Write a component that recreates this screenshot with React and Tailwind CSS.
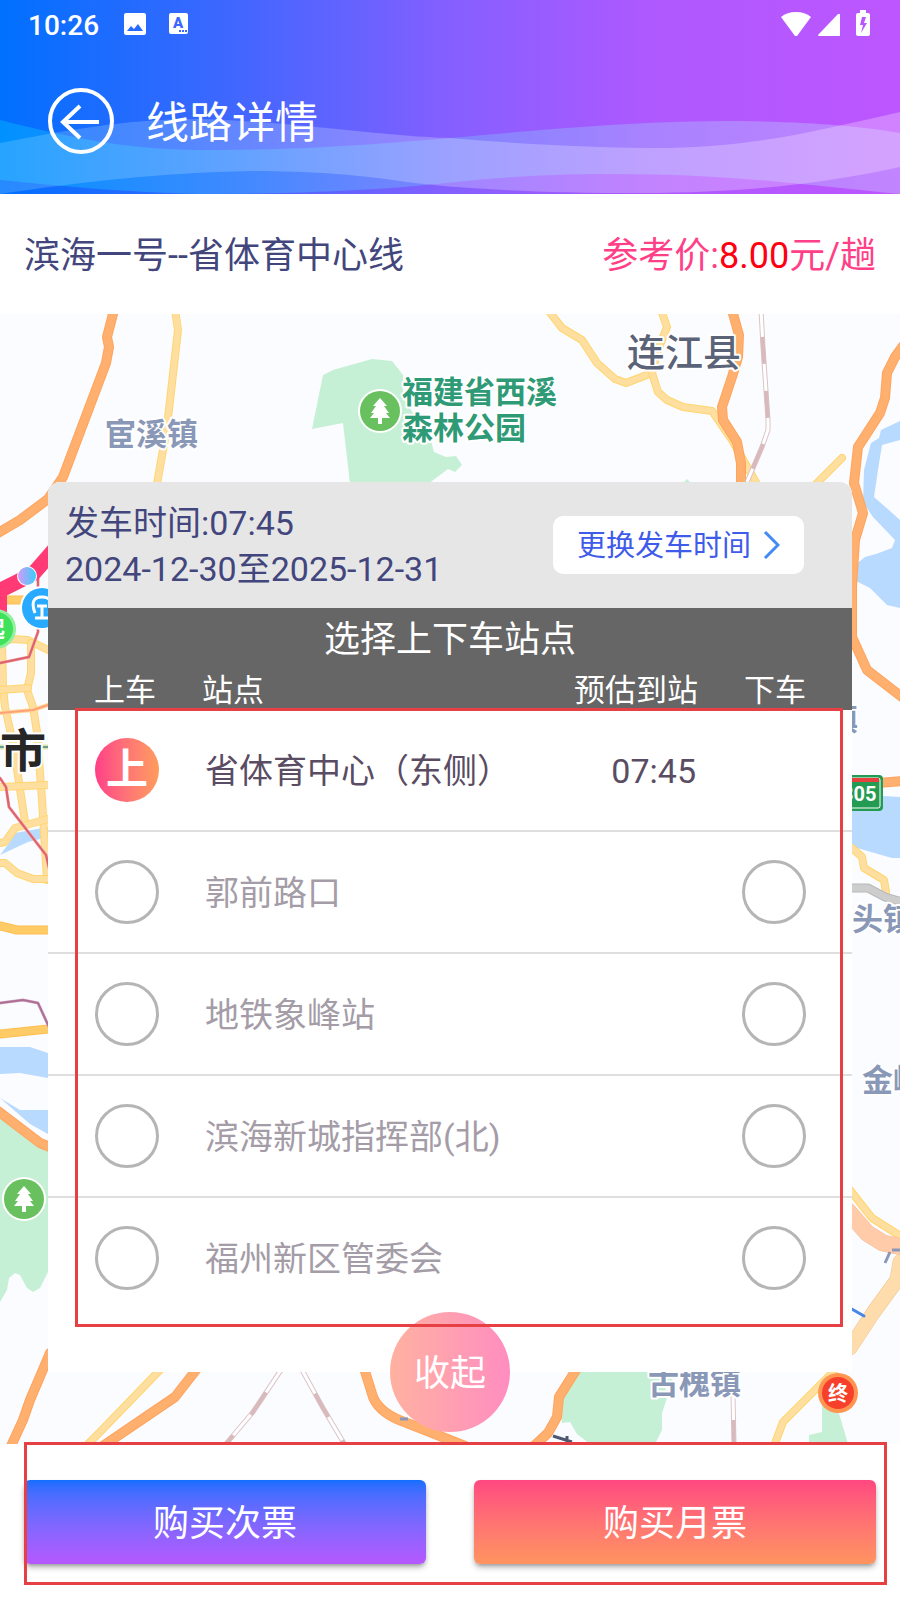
// App.jsx
import React, { useState } from 'react';

const STOPS = [
  { id: 1, name: '省体育中心（东侧）', time: '07:45' },
  { id: 2, name: '郭前路口' },
  { id: 3, name: '地铁象峰站' },
  { id: 4, name: '滨海新城指挥部(北)' },
  { id: 5, name: '福州新区管委会' },
];

// [kind, path]
const ROADS = [
  ['teal', 'M0 747H48'],
  ['yellow', 'M175 310L178 330L167 427L157 484'],
  ['yellow', 'M548 310L562 328L582 340L597 363L615 379L626 383L652 373'],
  ['yellow', 'M661 310L667 327L658 350L652 373L658 392L667 400L683 407L712 411L732 440L745 463L758 486'],
  ['yellow', 'M842 458L815 485'],
  ['yellow', 'M0 642L12 639L28 640L48 650'],
  ['yellow', 'M31 643L31 673L27 690L33 707L37 732L42 800L47 880'],
  ['yellow', 'M2 643L3 687L5 707L13 743L25 822'],
  ['yellow', 'M0 690L28 688'],
  ['yellow', 'M0 787L48 785'],
  ['yellow', 'M48 819L15 828L5 842L0 843'],
  ['yellow', 'M0 863L5 863L17 873L33 879L50 879'],
  ['yellow', 'M852 848L862 857L864 868L884 880L886 892'],
  ['yellow', 'M850 1190L872 1218L902 1237'],
  ['yellow', 'M160 1370L100 1432L86 1446'],
  ['yellow', 'M835 1370L783 1422L774 1446'],
  ['amber', 'M0 600H24'],
  ['amber', 'M0 926L17 930H48'],
  ['amber', 'M0 1034L48 1029'],
  ['orange', 'M114 310L107 337L109 347L106 363L63 477L48 499L20 520L-2 533'],
  ['orange', 'M732 310L739 335L738 357L732 377L722 407L723 420L737 442L741 463L741 484'],
  ['orange', 'M903 346L895 357L887 373L885 398L880 413L858 447L854 483L863 513L855 540L852 587L852 637L867 670L902 697'],
  ['orange', 'M878 783L902 781'],
  ['orange', 'M-2 1111L40 1143L50 1147'],
  ['orange', 'M50 1353L30 1400L23 1420L11 1446'],
  ['orange', 'M196 1370L175 1397L103 1446'],
  ['orange', 'M364 1368L373 1397Q380 1414 407 1423L465 1446'],
  ['orange', 'M576 1370L559 1397L557 1417L548 1433L534 1446'],
  ['coral', 'M0 713L33 710L48 705'],
  ['red', 'M38 578V632L29 657L0 663'],
  ['red', 'M0 778L6 787L9 807L46 855L49 868'],
  ['purple', 'M0 1003L23 1000L38 1003L49 1027'],
  ['grey', 'M850 888L868 888L885 897L902 902'],
  ['salmon', 'M848 1211L867 1233L883 1243L902 1247'],
  ['peach', 'M900 1262L897 1280L873 1313L850 1348'],
  ['blue', 'M850 1308L864 1316'],
];

const ROAD_STYLES = {
  teal: { edge: '#d8e5b0', edgeWidth: 5, fill: '#6b9b8c', width: 2 },
  yellow: { edge: '#ffd66e', edgeWidth: 8, fill: '#ffdf9f', width: 6 },
  amber: { edge: '#ffbe50', edgeWidth: 9, fill: '#ffcb66', width: 7 },
  orange: { edge: '#ffa35c', edgeWidth: 10, fill: '#ffb06f', width: 8 },
  coral: { edge: '#ffd890', edgeWidth: 4, fill: '#ffa07c', width: 2 },
  red: { edge: '#f0a0a5', edgeWidth: 3, fill: '#de616b', width: 2 },
  purple: { edge: '#d6b0c6', edgeWidth: 3, fill: '#ad6f95', width: 2 },
  grey: { edge: '#b8b8b8', edgeWidth: 9, fill: '#cdcdcd', width: 7 },
  salmon: { edge: '#f6bb98', edgeWidth: 17, fill: '#ffcba9', width: 16 },
  peach: { edge: '#f0c790', edgeWidth: 15, fill: '#ffdcab', width: 14 },
  blue: { edge: '#4a86e8', edgeWidth: 3, fill: '#4a86e8', width: 2 },
};

const RAILS = [
  'M761 310L763 347L768 420L768 430L762 447L747 482',
  'M281 1370L253 1412L225 1445',
  'M302 1370L323 1408L345 1445',
  'M733 1393L734 1445',
];

const LABELS = [
  { text: '宦溪镇', x: 105, y: 445, className: 'fill-[#8a98b8] text-[31px] font-bold' },
  { text: '福建省西溪', x: 402, y: 403, className: 'fill-[#2f9b76] text-[31px] font-bold' },
  { text: '森林公园', x: 402, y: 439, className: 'fill-[#2f9b76] text-[31px] font-bold' },
  { text: '连江县', x: 627, y: 366, className: 'fill-[#5a6378] text-[38px] font-medium' },
  { text: '市', x: 0, y: 767, className: 'fill-[#262626] text-[46px] font-bold' },
  { text: '镇', x: 827, y: 730, className: 'fill-[#8a98b8] text-[31px] font-bold' },
  { text: '头镇', x: 852, y: 930, className: 'fill-[#8a98b8] text-[31px] font-bold' },
  { text: '金峰镇', x: 862, y: 1091, className: 'fill-[#8a98b8] text-[31px] font-bold' },
  { text: '古槐镇', x: 648, y: 1394, className: 'fill-[#8a98b8] text-[31px] font-bold' },
];

const ParkPin = ({ x, y }) => (
  <g transform={`translate(${x} ${y})`}>
    <circle r="22" fill="#fff" />
    <circle r="20" fill="#69c05f" />
    <path d="M0 -13L7 -5H4L9 2H6L10 7H2V13H-2V7H-10L-6 2H-9L-4 -5H-7Z" fill="#fff" />
  </g>
);

const RouteMap = () => (
  <svg
    className="absolute inset-0 w-full h-full"
    viewBox="0 314 900 1130"
    preserveAspectRatio="xMidYMin slice"
    aria-label="线路地图"
  >
    <defs>
      <linearGradient id="busDot">
        <stop offset="0" stopColor="#d29bf7" />
        <stop offset="1" stopColor="#38cdfb" />
      </linearGradient>
    </defs>
    <rect y="314" width="900" height="1130" fill="#fbfcff" />

    {/* Water */}
    <g fill="#b8daff">
      <path d="M900 421L881 430L879 438L871 443L864 470L863 502L873 517L895 540L892 548L876 554L865 557L855 565L854 580L870 588L887 605L900 608V520L890 511L874 497L878 470L882 445L900 440Z" />
      <path d="M850 794L900 797V858L892 858L850 846Z" />
      <path d="M0 855L10 842L15 833L48 827V837L28 842Z" />
      <path d="M0 1047H30L48 1053V1078L20 1073L0 1074Z" />
      <path d="M0 1098L20 1110H48V1134L30 1124Z" />
    </g>

    {/* Parks */}
    <g fill="#c6f0d5">
      <path d="M323 375L333 370L372 359L392 361L403 375V397L413 413L430 437L434 452L446 457L456 456L462 465L455 472L448 469L428 484H350L343 423L312 429Z" />
      <path d="M684 482L687 479L690 482Z" />
      <path d="M0 1116L48 1148V1272L40 1288L33 1292L27 1288L20 1275L15 1273L9 1278L7 1290L0 1302Z" />
      <path d="M580 1370H683L665 1386L667 1398L662 1413L662 1430L655 1444H590L577 1434L570 1422L562 1423L560 1400Z" />
      <path d="M822 1400L838 1410L848 1444H809V1435L822 1432Z" />
    </g>

    <g fill="none" strokeLinejoin="round" strokeLinecap="round">
      {ROADS.map(([kind, d]) => (
        <g key={d}>
          <path d={d} stroke={ROAD_STYLES[kind].edge} strokeWidth={ROAD_STYLES[kind].edgeWidth} />
          <path d={d} stroke={ROAD_STYLES[kind].fill} strokeWidth={ROAD_STYLES[kind].width} />
        </g>
      ))}
    </g>

    <g fill="none">
      {RAILS.map((d) => (
        <g key={d}>
          <path d={d} stroke="#dcc4c6" strokeWidth="5" />
          <path d={d} stroke="#fff" strokeWidth="3" />
          <path d={d} stroke="#d8babd" strokeWidth="4" strokeDasharray="27 27" strokeDashoffset="27" />
        </g>
      ))}
      {/* Bus route */}
      <path d="M-3 592L33 574L54 550" stroke="#ff3a74" strokeWidth="15" strokeLinejoin="round" />
      <path d="M2 588V612" stroke="#ff3a74" strokeWidth="10" />
      <path d="M553 1436L572 1442M567 1436V1444" stroke="#4f5870" strokeWidth="3" />
      <path d="M400 1419H408M900 1250H892M890 1252L885 1263" stroke="#8a98b8" strokeWidth="3" />
    </g>

    <g
      stroke="#fff"
      strokeWidth="4"
      strokeLinejoin="round"
      style={{ paintOrder: 'stroke' }}
    >
      {LABELS.map((label) => (
        <text key={label.text + label.y} x={label.x} y={label.y} className={label.className}>
          {label.text}
        </text>
      ))}
    </g>

    {/* Highway shield */}
    <rect x="822" y="775" width="61" height="36" rx="4" fill="#249b52" />
    <rect x="824" y="778" width="56" height="30" rx="2" fill="none" stroke="#fff" />
    <rect x="825" y="778" width="54" height="4" fill="#e8403f" />
    <text x="842" y="801" className="fill-white text-[20px] font-bold">305</text>

    <ParkPin x={380} y={411} />
    <ParkPin x={24} y={1199} />

    <circle cx="27" cy="576" r="10" fill="#fff" />
    <circle cx="27" cy="576" r="9" fill="url(#busDot)" />

    <circle cx="42" cy="608" r="22" fill="#fff" />
    <circle cx="42" cy="608" r="20" fill="#27aaff" />
    <path
      d="M35 613Q29 597 42 597Q55 597 49 613M37 606H47M42 606V617M35 618H49"
      fill="none"
      stroke="#fff"
      strokeWidth="3"
    />

    <circle cx="-4" cy="629" r="20" fill="#93ef9c" />
    <circle cx="-4" cy="629" r="17" fill="#3ee25c" />
    <text x="-17" y="637" className="fill-white text-[22px] font-bold">起</text>

    <circle cx="838" cy="1393" r="20" fill="#ff9550" />
    <circle cx="838" cy="1393" r="16" fill="#f6402c" />
    <text x="828" y="1401" className="fill-white text-[20px] font-bold">终</text>
  </svg>
);

const HeaderWaves = () => (
  <svg
    className="absolute inset-x-0 bottom-0 w-full h-[84px]"
    viewBox="0 110 900 84"
    preserveAspectRatio="none"
    aria-hidden="true"
  >
    <defs>
      <linearGradient id="waveBlue">
        <stop offset="0" stopColor="#00f0ff" stopOpacity="0.26" />
        <stop offset="0.5" stopColor="#74e0ff" stopOpacity="0.28" />
        <stop offset="1" stopColor="#d0f0ff" stopOpacity="0.3" />
      </linearGradient>
      <linearGradient id="waveWhite">
        <stop offset="0" stopColor="#c0f0ff" stopOpacity="0.2" />
        <stop offset="0.5" stopColor="#f4ffff" stopOpacity="0.24" />
        <stop offset="1" stopColor="#ffe8ff" stopOpacity="0.3" />
      </linearGradient>
    </defs>
    <path
      d="M0 120C80 140 130 150 210 150C320 150 400 142 450 138C560 128 640 121 740 121C810 122 860 126 900 133V194C820 187 740 174 610 174C500 174 450 184 390 188C310 193 260 194 200 194C120 192 60 186 0 180Z"
      fill="url(#waveBlue)"
    />
    <path
      d="M0 143C60 132 120 119 200 119C300 122 380 136 450 138C520 144 590 148 670 148C760 146 820 130 900 112V167C840 180 760 193 640 193C520 193 440 187 400 181C350 174 310 171 250 171C160 173 80 182 0 194Z"
      fill="url(#waveWhite)"
    />
  </svg>
);

const StatusBar = () => (
  <div className="relative flex items-center justify-between h-12 pl-7 pr-[30px]">
    <div className="flex items-center">
      <span className="pt-1 text-[28px] leading-8 font-medium">10:26</span>
      <svg className="ml-6 w-6 h-6" viewBox="0 0 24 24" fill="currentColor" aria-hidden="true">
        <path
          fillRule="evenodd"
          d="M3 1H21Q23 1 23 3V21Q23 23 21 23H3Q1 23 1 21V3Q1 1 3 1ZM4 19H20L15 12L11 17L8 14Z"
        />
      </svg>
      <svg className="ml-5 w-6 h-6" viewBox="0 0 24 24" aria-hidden="true">
        <rect x="2" y="1" width="19" height="21" rx="2" fill="currentColor" />
        <text x="6" y="16" className="fill-[#3d67ff] text-[15px] font-black">A</text>
        <path d="M12 19H20" stroke="#3d67ff" strokeWidth="2" strokeDasharray="2 1" />
      </svg>
    </div>
    <div className="flex items-center">
      <svg className="w-8 h-7" viewBox="0 0 32 28" fill="currentColor" aria-hidden="true">
        <path d="M1 7Q7 2 16 2T31 7L17 26H15Z" />
      </svg>
      <svg className="ml-1.5 w-6 h-7" viewBox="0 0 24 28" fill="currentColor" aria-hidden="true">
        <path d="M22 4V26H1Q0 26 0 25L20 4Z" />
      </svg>
      <svg className="ml-3.5 w-[14px] h-7" viewBox="0 0 14 28" fill="currentColor" aria-hidden="true">
        <path
          fillRule="evenodd"
          d="M4 0H10V3H12Q14 3 14 5V24Q14 26 12 26H2Q0 26 0 24V5Q0 3 2 3H4ZM6 7L4 15H7L5 23L11 13H8L10 7Z"
        />
      </svg>
    </div>
  </div>
);

const StopRadio = ({ name, label, mark, checked, onChange }) => (
  <label className="relative block w-16 h-16 mx-auto cursor-pointer">
    <input
      type="radio"
      name={name}
      aria-label={label}
      checked={checked}
      onChange={onChange}
      className="block appearance-none w-16 h-16 rounded-full border-[3px] border-[#b5b5b5] checked:border-0 checked:bg-linear-to-r checked:from-[#ff3d87] checked:to-[#ff9c5c]"
    />
    {checked && (
      <span className="absolute inset-0 flex items-center justify-center text-[42px] leading-none font-bold text-white pointer-events-none">
        {mark}
      </span>
    )}
  </label>
);

const StopTable = () => {
  const [boarding, setBoarding] = useState(1);
  const [alighting, setAlighting] = useState(null);

  return (
    <table className="w-full table-fixed border-separate border-spacing-0">
      <caption className="h-[60px] pt-1 bg-[#666] text-white text-[36px] leading-14">
        选择上下车站点
      </caption>
      <thead>
        <tr className="h-[42px] bg-[#666] text-white text-[31px] leading-9">
          <th className="w-[154px] p-0 pt-1 font-normal">上车</th>
          <th className="p-0 pt-1 font-normal text-left">站点</th>
          <th className="w-[160px] p-0 pt-1 font-normal text-right">预估到站</th>
          <th className="w-[154px] p-0 pt-1 font-normal">下车</th>
        </tr>
      </thead>
      <tbody>
        {STOPS.map((stop) => (
          <tr
            key={stop.id}
            className={`
              h-[122px] text-[34px] leading-10
              *:border-b-2 *:border-[#dedede] last:*:border-transparent
              ${stop.id === boarding ? 'text-[#594c63]' : 'text-[#a49ca7]'}
            `}
          >
            <td className="p-0 pl-1">
              <StopRadio
                name="boarding"
                label={`${stop.name} 上车`}
                mark="上"
                checked={stop.id === boarding}
                onChange={() => setBoarding(stop.id)}
              />
            </td>
            <td className="p-0 pt-0.5 pl-[3px] whitespace-nowrap">{stop.name}</td>
            <td className="p-0 pt-0.5 pr-0.5 text-right">{stop.time}</td>
            <td className="p-0 pr-0.5">
              {stop.id !== boarding && (
                <StopRadio
                  name="alighting"
                  label={`${stop.name} 下车`}
                  mark="下"
                  checked={stop.id === alighting}
                  onChange={() => setAlighting(stop.id)}
                />
              )}
            </td>
          </tr>
        ))}
      </tbody>
    </table>
  );
};

const App = () => {
  return (
    <div className="min-h-screen flex flex-col bg-white font-[Roboto,'Noto_Sans_CJK_SC',sans-serif]">
      <header className="relative text-white bg-[linear-gradient(90deg,#0070ff,#3d67ff_25%,#855fff_50%,#ae59ff_72%,#bd56ff)]">
        <HeaderWaves />
        <StatusBar />
        <div className="relative flex items-center gap-8 h-[146px] px-12">
          <button type="button" aria-label="返回" className="w-[66px] h-[66px]">
            <svg viewBox="0 0 66 66" fill="none" stroke="currentColor" strokeWidth="4">
              <circle cx="33" cy="33" r="31" />
              <path d="M51 34H15M32 18L15 34L32 50" />
            </svg>
          </button>
          <h1 className="pt-1 text-[43px] leading-[60px]">线路详情</h1>
        </div>
      </header>

      <div className="flex items-center justify-between h-30 pt-1 px-6 text-[36px] leading-[48px]">
        <h2 className="text-[#43467d]">滨海一号--省体育中心线</h2>
        <p className="text-[#ff3f87]">
          参考价:<span className="text-[#ff0010]">8.00</span>元/趟
        </p>
      </div>

      <main className="relative px-12 pt-[168px] pb-[72px] overflow-hidden">
        <RouteMap />

        <section className="relative bg-white rounded-t-xl">
          <div className="flex items-center justify-between h-[126px] pl-[17px] pr-12 bg-[#e6e6e6] rounded-t-xl">
            <p className="pt-0.5 text-[34px] leading-[46px] text-[#43467d]">
              发车时间:07:45
              <br />
              2024-12-30至2025-12-31
            </p>
            <button
              type="button"
              className="flex items-center gap-3 h-[58px] px-6 rounded-[10px] bg-white text-[29px] text-[#3f5bea]"
            >
              <span className="pt-1">更换发车时间</span>
              <svg className="w-[17px] h-7" viewBox="0 0 17 28" fill="none" stroke="#438af5" strokeWidth="3" aria-hidden="true">
                <path d="M2 1L15 14L2 27" />
              </svg>
            </button>
          </div>

          <StopTable />

          <div className="relative h-[52px]">
            <button
              type="button"
              className="absolute left-1/2 -bottom-15 -translate-x-1/2 w-30 h-30 pt-1 rounded-full bg-linear-to-r from-[#ffb1a0] to-[#ff8dc0] text-white text-[36px]"
            >
              收起
            </button>
          </div>

          {/* Highlight frame around the stop list */}
          <div className="absolute left-[27px] right-[9px] top-[226px] bottom-[45px] border-[3px] border-[#e64044] pointer-events-none"></div>
        </section>
      </main>

      <footer className="relative grid grid-cols-2 gap-12 px-6 pt-9 pb-9 text-white text-[36px]">
        <button
          type="button"
          className="h-[84px] pt-1 rounded-md bg-linear-to-b from-[#106eff] to-[#b558ff] shadow-md shadow-black/30"
        >
          购买次票
        </button>
        <button
          type="button"
          className="h-[84px] pt-1 rounded-md bg-linear-to-b from-[#ff4780] to-[#ff945f] shadow-md shadow-black/30"
        >
          购买月票
        </button>

        {/* Highlight frame around the purchase buttons */}
        <div className="absolute left-6 right-[13px] -top-0.5 bottom-[15px] border-[3px] border-[#e64044] pointer-events-none"></div>
      </footer>
    </div>
  );
};

export default App;
